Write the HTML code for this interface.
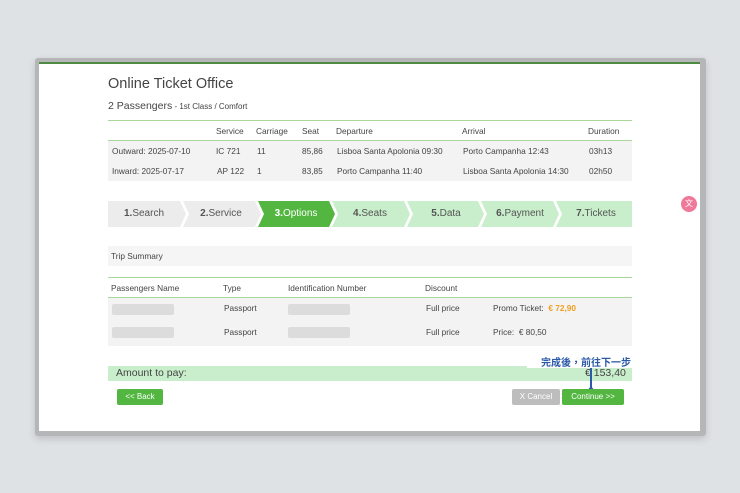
<!DOCTYPE html>
<html><head><meta charset="utf-8"><style>
*{box-sizing:border-box;margin:0;padding:0}
body{width:740px;height:493px;background:#dfe2e5;font-family:"Liberation Sans","Noto Sans CJK TC",sans-serif;position:relative;overflow:hidden;color:#444}
.frame{position:absolute;left:35px;top:58px;width:671px;height:378px;background:#b4b6b8;border-radius:3px;box-shadow:0 3px 8px rgba(0,0,0,.15)}
.win{position:absolute;left:39px;top:62px;width:661px;height:369px;background:#fff;border-top:2px solid #4f8a43}
.a{position:absolute;white-space:nowrap}
.f8{font-size:8.3px}
.row{position:absolute;left:108px;width:524px}
.step{position:absolute;top:201px;height:26px;line-height:26px;text-align:center;font-size:10px;color:#555}
.bar{position:absolute;background:#dcdcdc;border-radius:2px;height:11px}
.btn{position:absolute;height:16px;line-height:16px;text-align:center;color:#fff;font-size:8px;border-radius:2px}
</style></head><body>
<div class="frame"></div>
<div class="win"></div>
<div class="a" style="left:108px;top:76px;font-size:14.5px;color:#444">Online Ticket Office</div>
<div class="a" style="left:108px;top:100px;font-size:10.5px;color:#444">2 Passengers<span style="font-size:8px"> - 1st Class / Comfort</span></div>
<div class="row" style="top:120px;height:1px;background:#a9d69b"></div>
<div class="row" style="top:140px;height:1px;background:#a9d69b"></div>
<div class="row" style="top:141px;height:40px;background:#f3f3f3"></div>
<div class="a f8" style="left:216px;top:126px">Service</div>
<div class="a f8" style="left:256px;top:126px">Carriage</div>
<div class="a f8" style="left:302px;top:126px">Seat</div>
<div class="a f8" style="left:336px;top:126px">Departure</div>
<div class="a f8" style="left:462px;top:126px">Arrival</div>
<div class="a f8" style="left:588px;top:126px">Duration</div>
<div class="a f8" style="left:112px;top:146px">Outward: 2025-07-10</div>
<div class="a f8" style="left:216px;top:146px">IC 721</div>
<div class="a f8" style="left:257px;top:146px">11</div>
<div class="a f8" style="left:302px;top:146px">85,86</div>
<div class="a f8" style="left:337px;top:146px">Lisboa Santa Apolonia 09:30</div>
<div class="a f8" style="left:463px;top:146px">Porto Campanha 12:43</div>
<div class="a f8" style="left:589px;top:146px">03h13</div>
<div class="a f8" style="left:112px;top:166px">Inward: 2025-07-17</div>
<div class="a f8" style="left:217px;top:166px">AP 122</div>
<div class="a f8" style="left:257px;top:166px">1</div>
<div class="a f8" style="left:302px;top:166px">83,85</div>
<div class="a f8" style="left:337px;top:166px">Porto Campanha 11:40</div>
<div class="a f8" style="left:463px;top:166px">Lisboa Santa Apolonia 14:30</div>
<div class="a f8" style="left:589px;top:166px">02h50</div>
<svg class="a" style="left:108px;top:201px" width="524" height="26">
<polygon points="0,0 72,0 78,13 72,26 0,26" fill="#ececec"/>
<polygon points="75,0 147,0 153,13 147,26 75,26 81,13" fill="#ececec"/>
<polygon points="150,0 221,0 227,13 221,26 150,26 156,13" fill="#52b640"/>
<polygon points="224,0 296,0 302,13 296,26 224,26 230,13" fill="#c9eecb"/>
<polygon points="299,0 370,0 376,13 370,26 299,26 305,13" fill="#c9eecb"/>
<polygon points="373,0 445,0 451,13 445,26 373,26 379,13" fill="#c9eecb"/>
<polygon points="448,0 524,0 524,26 448,26 454,13" fill="#c9eecb"/>
</svg>
<div class="step" style="left:108px;width:72px"><b>1.</b>Search</div>
<div class="step" style="left:185px;width:72px"><b>2.</b>Service</div>
<div class="step" style="left:260px;width:72px;color:#fff"><b>3.</b>Options</div>
<div class="step" style="left:334px;width:72px"><b>4.</b>Seats</div>
<div class="step" style="left:410px;width:72px"><b>5.</b>Data</div>
<div class="step" style="left:484px;width:72px"><b>6.</b>Payment</div>
<div class="step" style="left:560px;width:72px"><b>7.</b>Tickets</div>
<div class="row" style="top:246px;height:20px;background:#f5f5f5"></div>
<div class="a f8" style="left:111px;top:251px">Trip Summary</div>
<div class="row" style="top:277px;height:1px;background:#a9d69b"></div>
<div class="row" style="top:297px;height:1px;background:#a9d69b"></div>
<div class="row" style="top:298px;height:48px;background:#f3f3f3"></div>
<div class="a f8" style="left:111px;top:283px">Passengers Name</div>
<div class="a f8" style="left:223px;top:283px">Type</div>
<div class="a f8" style="left:288px;top:283px">Identification Number</div>
<div class="a f8" style="left:425px;top:283px">Discount</div>
<div class="bar" style="left:112px;top:304px;width:62px"></div>
<div class="bar" style="left:288px;top:304px;width:62px"></div>
<div class="bar" style="left:112px;top:327px;width:62px"></div>
<div class="bar" style="left:288px;top:327px;width:62px"></div>
<div class="a f8" style="left:224px;top:303px">Passport</div>
<div class="a f8" style="left:426px;top:303px">Full price</div>
<div class="a f8" style="left:493px;top:303px">Promo Ticket: &nbsp;<b style="color:#f0a020">€ 72,90</b></div>
<div class="a f8" style="left:224px;top:327px">Passport</div>
<div class="a f8" style="left:426px;top:327px">Full price</div>
<div class="a f8" style="left:493px;top:327px">Price: &nbsp;€ 80,50</div>
<div class="row" style="top:366px;height:15px;background:#c9eecb"></div>
<div class="a" style="left:116px;top:367px;font-size:10.5px;color:#444">Amount to pay:</div>
<div class="a" style="left:585px;top:367px;font-size:10.5px;color:#444">€ 153,40</div>
<div class="a" style="left:527px;top:354px;width:117px;height:14px;background:#fff"></div>
<div class="a" style="left:541px;top:354px;font-size:10px;font-weight:bold;color:#2b5aa8">完成後，前往下一步</div>
<div class="a" style="left:590px;top:368px;width:1.5px;height:22px;background:#2b5aa8"></div>
<div class="a" style="left:587px;top:386px;width:0;height:0;border-left:4px solid transparent;border-right:4px solid transparent;border-bottom:5px solid #2b5aa8"></div>
<div class="btn" style="left:117px;top:389px;width:46px;background:#52b640">&lt;&lt; Back</div>
<div class="btn" style="left:512px;top:389px;width:48px;background:#bdbdbd">X Cancel</div>
<div class="btn" style="left:562px;top:389px;width:62px;background:#52b640">Continue &gt;&gt;</div>
<div class="a" style="left:681px;top:196px;width:16px;height:16px;border-radius:50%;background:#f0789a;color:#fff;font-size:8px;line-height:16px;text-align:center">文</div>
</body></html>
